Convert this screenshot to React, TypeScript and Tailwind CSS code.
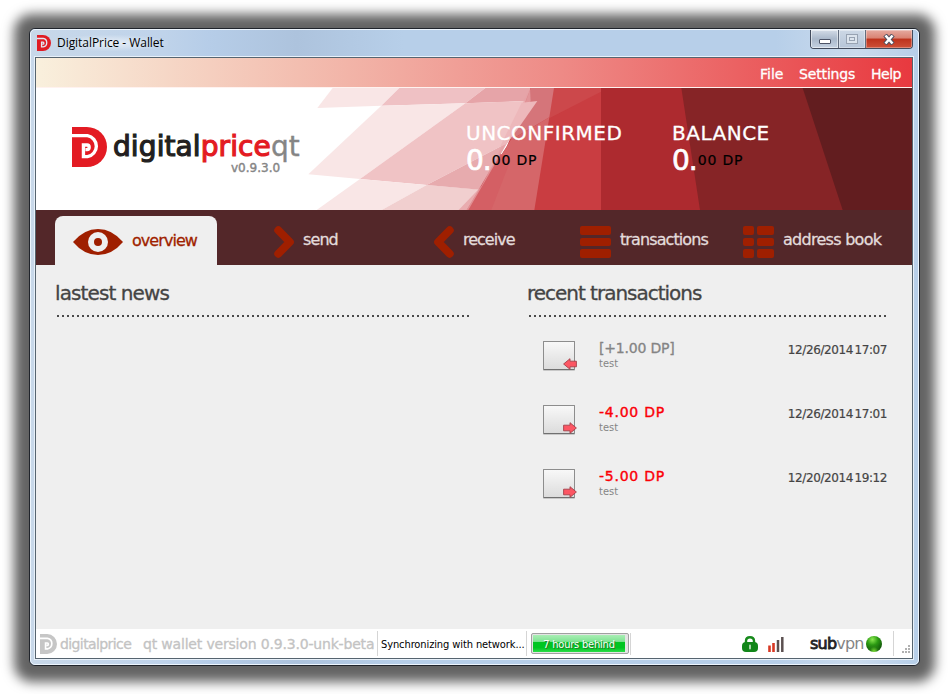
import { ReactNode } from "react";

const transactions = [
  { amount: "[+1.00 DP]", color: "text-[#848484] tracking-[-0.2px] [-webkit-text-stroke:0.3px_#848484]", label: "test", date: "12/26/2014 17:07", incoming: true },
  { amount: "-4.00 DP", color: "text-[#fb0007] tracking-[0.75px] [-webkit-text-stroke:0.4px_#fb0007]", label: "test", date: "12/26/2014 17:01", incoming: false },
  { amount: "-5.00 DP", color: "text-[#fb0007] tracking-[0.75px] [-webkit-text-stroke:0.4px_#fb0007]", label: "test", date: "12/20/2014 19:12", incoming: false },
];

const LogoMark = ({ className, color, gap = "#fff" }: { className: string; color: string; gap?: string }) => (
  <svg className={className} viewBox="0 0 104 120" preserveAspectRatio="none">
    <path d="M0 0H44A60 60 0 0 1 44 120H0Z" fill={color} />
    <path d="M0 26H46A32 32 0 0 1 46 89H34V54H45Q51 54 51 61T45 68H40" fill="none" stroke={gap} strokeWidth="10" />
  </svg>
);

const HeaderArt = () => (
  <svg className="absolute inset-0 h-full w-full" viewBox="-792 114 2628 366" preserveAspectRatio="none">
    <rect x="-792" y="114" width="2628" height="366" fill="#fff" />
    <polygon points="98,114 298,114 244,167 52,174" fill="#f9e6e6" />
    <polygon points="298,114 556,114 496,160 244,167" fill="#efc1c4" />
    <polygon points="556,114 700,114 680,153 496,160" fill="#e6a4a8" />
    <polygon points="244,167 496,160 180,387 25,373" fill="#f9e6e6" />
    <polygon points="496,160 672,153 712,153 620,280 380,405 180,387" fill="#f0c3c5" />
    <polygon points="180,387 380,405 245,480 50,480" fill="#f9e6e6" />
    <polygon points="380,405 555,420 505,480 245,480" fill="#f1cfcf" />
    <polygon points="380,405 620,280 540,419" fill="#e7abae" />
    <polygon points="692,114 906,114 906,480 500,480 620,290 660,195" fill="#c93d41" />
    <polygon points="762,114 903,114 903,125 718,220" fill="#cc484b" />
    <polygon points="692,114 762,114 748,202 632,270 672,172" fill="#d5757a" />
    <polygon points="632,270 748,202 703,480 500,480" fill="#d56669" />
    <polygon points="632,330 574,480 500,480 600,310" fill="#d45f64" />
    <polygon points="690,114 692,153 660,205 620,282 505,480 476,480 545,408 640,220" fill="#e6a0a4" opacity=".75" />
    <polygon points="665,158 712,153 655,235 620,282 600,290" fill="#edb8bb" />
    <polygon points="903,114 1148,114 1204,480 903,480" fill="#ad2a2f" />
    <polygon points="1144,114 1512,114 1632,480 1200,480" fill="#862426" />
    <polygon points="1508,114 1836,114 1836,480 1628,480" fill="#621d1f" />
  </svg>
);

const Amount = ({ title, className }: { title: string; className: string }) => (
  <div className={`absolute top-[33px] whitespace-nowrap text-white ${className}`}>
    <div className="text-[20px] leading-6 tracking-[0.5px] [-webkit-text-stroke:0.3px_#fff]">{title}</div>
    <div className="flex h-[30px] items-start pt-px">
      <span className="text-[28px] leading-[30px] tracking-[-1px] [-webkit-text-stroke:0.7px_#fff]">0.</span>
      <span className="ml-px mt-[5px] text-[14px] leading-[18px] tracking-[0.8px] text-black [-webkit-text-stroke:0.2px_#000]">00 DP</span>
    </div>
  </div>
);

const Chevron = ({ left }: { left?: boolean }) => (
  <svg className={left ? "h-8 w-5 -scale-x-100" : "h-8 w-5"} viewBox="0 0 20 32">
    <path d="M4.300 4.300L15.800 16L4.300 27.700" fill="none" stroke="#9f1f00" strokeWidth="8" strokeLinecap="round" strokeLinejoin="round" />
  </svg>
);

const NavItem = ({ icon, children, className, textClass }: { icon: ReactNode; children: ReactNode; className: string; textClass: string }) => (
  <button className={`flex h-[33px] items-center whitespace-nowrap text-[#e3dcdc] ${className}`}>
    {icon}
    <span className={`-mt-[3px] ml-[9px] text-[16px] leading-5 [-webkit-text-stroke:0.3px_#e3dcdc] ${textClass}`}>{children}</span>
  </button>
);

const WindowButtons = () => (
  <div className="mr-px flex h-[19px] w-[103px] overflow-hidden rounded-b-[4px] border border-t-0 border-[#424b5c]">
    <div className="flex w-7 items-end justify-center border-r border-[#626d7e] bg-gradient-to-b from-[#d4dce7] via-[#aab8ca] to-[#c5d2e2] pb-1 shadow-[inset_0_0_0_1px_#ffffff80]">
      <div className="h-[5px] w-3 rounded-[1px] border border-[#4d5467] bg-white" />
    </div>
    <div className="flex w-[27px] items-center justify-center border-r border-[#626d7e] bg-gradient-to-b from-[#cdd8e5] to-[#b6c5d8] shadow-[inset_0_0_0_1px_#ffffff60]">
      <div className="flex h-[10px] w-3 items-center justify-center border border-[#98a3b2] bg-[#dce4ed]">
        <div className="h-1 w-[6px] border border-[#98a3b2]" />
      </div>
    </div>
    <div className="flex flex-1 items-center justify-center bg-[linear-gradient(#e5aaa0_0%,#d98272_45%,#bd321c_50%,#ce5138_100%)] shadow-[inset_0_0_0_1px_#ffffff50]">
      <svg className="h-[11px] w-3" viewBox="0 0 12 11">
        <path d="M2 1L10 10M10 1L2 10" stroke="#4f5060" strokeWidth="4.500" />
        <path d="M2.500 1.500L9.500 9.500M9.500 1.500L2.500 9.500" stroke="#fff" strokeWidth="2.600" />
      </svg>
    </div>
  </div>
);

const TransactionIcon = ({ incoming }: { incoming: boolean }) => (
  <div className="relative h-[29px] w-[33px] shrink-0">
    <div className="h-[29px] w-8 rounded-[1px] border border-[#8d8d8d] border-b-[#707070] bg-gradient-to-b from-[#f8f8f8] to-[#dcdcdc] shadow-[0_1px_0_#c8c8c8]" />
    <svg className={`absolute left-[20px] top-[17px] h-3 w-[14px] ${incoming ? "" : "-scale-x-100"}`} viewBox="0 0 14 12">
      <path d="M.6 6L7 .7V3.200H13.400V8.800H7V11.300Z" fill="#fc5663" stroke="#a5404a" strokeWidth=".9" strokeLinejoin="round" />
    </svg>
  </div>
);

const Dots = ({ className }: { className: string }) => (
  <div className={`h-[2px] bg-[repeating-linear-gradient(90deg,#4a4a4a_0_2px,transparent_2px_5px)] ${className}`} />
);

const StatusBar = () => (
  <footer className="flex h-[29px] items-center whitespace-nowrap bg-white">
    <LogoMark className="ml-1 h-5 w-[17px]" color="#c6c6c6" />
    <span className="ml-[3px] w-[72px] text-[14px] leading-5 tracking-[-0.6px] text-[#c3c3c3] [-webkit-text-stroke:0.3px_#c3c3c3]">digitalprice</span>
    <span className="ml-[11px] w-[234px] text-[14px] leading-5 tracking-[-0.18px] text-[#c3c3c3] [-webkit-text-stroke:0.3px_#c3c3c3]">qt wallet version 0.9.3.0-unk-beta</span>
    <span className="h-[25px] w-px bg-[#d5d5d5]" />
    <span className="ml-[3px] mt-[3px] w-[145px] font-['DejaVu_Sans_Condensed'] text-[11px] leading-4 tracking-[-0.1px] text-black">Synchronizing with network...</span>
    <span className="h-[25px] w-px bg-[#d5d5d5]" />
    <div className="ml-1 flex h-[21px] w-[98px] rounded-[2px] border border-[#a0a0a0] bg-[#e4e4e4] p-px pr-[3px]">
      <div className="flex flex-1 items-center justify-center bg-[linear-gradient(#a9eeb5_0%,#7fe392_38%,#00c521_42%,#00c521_75%,#2bdd49_100%)] pt-[2px] font-['DejaVu_Sans_Condensed'] text-[11px] leading-4 tracking-[-0.2px] text-white [text-shadow:1px_1px_0_#267c2e]">
        7 hours behind
      </div>
    </div>
    <span className="ml-px h-[22px] w-px bg-[#d5d5d5]" />
    <svg className="ml-[111px] mt-px h-4 w-4" viewBox="0 0 16 16">
      <path d="M4 8V5Q4 1.300 8 1.300T12 5V8" fill="none" stroke="#178a1c" strokeWidth="2.400" />
      <rect y="6" width="16" height="10" rx="4" fill="#118619" />
      <path d="M8 9.500V12.500" stroke="#b9dfb9" strokeWidth="1.800" strokeLinecap="round" />
    </svg>
    <svg className="ml-[10px] h-4 w-4" viewBox="0 0 16 16">
      <path d="M1.500 16V9.500M5.500 16V7" stroke="#d73824" strokeWidth="2.600" />
      <path d="M10 16V4M14.300 16V1" stroke="#5b5050" strokeWidth="2.500" />
    </svg>
    <span className="ml-[26px] w-[54px] text-[16px] leading-5 tracking-[-0.8px] text-[#858585]">
      <span className="text-[#222] [-webkit-text-stroke:0.8px_#222]">sub</span>vpn
    </span>
    <span className="ml-[2px] h-4 w-4 rounded-full bg-[radial-gradient(circle_at_50%_95%,#78dc35_0%,#2b8c1380_25%,transparent_45%),radial-gradient(circle_at_40%_22%,#8be950_0%,#2c9c13_35%,#0a4807_80%)]" />
    <span className="ml-[11px] h-[25px] w-px bg-[#d5d5d5]" />
    <svg className="ml-[7px] mt-3 h-[10px] w-[10px] fill-[#b1b1b1]" viewBox="0 0 10 10">
      <path d="M7 0h2v2h-2zM4 3h2v2h-2zM7 3h2v2h-2zM1 6h2v2h-2zM4 6h2v2h-2zM7 6h2v2h-2z" />
    </svg>
  </footer>
);

export default function App() {
  return (
    <div className="h-[694px] w-[948px] overflow-hidden bg-white px-[29px] pt-7 font-['DejaVu_Sans',sans-serif]">
      <div className="h-[638px] w-[891px] rounded-[6px] border border-[#20242b] bg-[#b7cfe9] shadow-[0_1px_12px_15px_#0000009c]">
        <div className="h-full rounded-[5px] border border-[#edf5fd] bg-[linear-gradient(90deg,#c8d8e9_0%,#bfd3ea_15%,#b6cde8_20%,#adc3dd_30%,#b7cfe9_42%,#b7cfe9_84%,#cbdbed_93%,#b7cfe9_100%)] px-[4px]">
          <div className="flex h-[27px] items-start justify-between pl-[2px]">
            <div className="flex items-center pt-[5px]">
              <LogoMark className="h-4 w-[14px]" color="#e01b24" gap="#e1e9f4" />
              <span className="ml-[2px] whitespace-nowrap bg-[radial-gradient(ellipse_at_center,#ffffffa0,transparent_75%)] px-1 font-['Open_Sans'] text-[12px] leading-4 tracking-[-0.05px] text-black">DigitalPrice - Wallet</span>
            </div>
            <WindowButtons />
          </div>

          <div className="h-[602px] w-[878px] border border-[#56646f] bg-[#efefef] shadow-[0_0_0_1px_#e8f1fa]">
            <nav className="flex h-[30px] items-center justify-end border-b border-[#fff2ef] bg-[linear-gradient(90deg,#f9f0dd_0%,#f3beb0_30%,#ee8a86_60%,#e8393f_100%)] pr-[10px] pt-[2px] text-[14px] leading-5 text-white [-webkit-text-stroke:0.3px_#fff]">
              <span className="w-[39px]">File</span>
              <span className="w-[72px] tracking-[-0.15px]">Settings</span>
              <span className="w-[31px] tracking-[-0.5px]">Help</span>
            </nav>

            <header className="relative h-[122px] overflow-hidden">
              <HeaderArt />
              <div className="absolute left-9 top-[39px] flex h-10 whitespace-nowrap">
                <LogoMark className="h-10 w-[35px]" color="#e31b23" />
                <div className="ml-[6px] mt-[7px] h-[26px] text-[28px] leading-[26px] tracking-[0.1px]">
                  <span className="inline-block text-[#231f20] [-webkit-text-stroke:1.2px_#231f20]">digital</span>
                  <span className="inline-block text-[#e31b23] [-webkit-text-stroke:1.2px_#e31b23]">price</span>
                  <span className="inline-block text-[#858585] [-webkit-text-stroke:0.4px_#858585]">qt</span>
                </div>
              </div>
              <div className="absolute left-[195px] top-[74px] h-3 text-[12px] leading-3 text-[#858585] [-webkit-text-stroke:0.4px_#858585]">v0.9.3.0</div>
              <Amount title="UNCONFIRMED" className="left-[430px]" />
              <Amount title="BALANCE" className="left-[636px]" />
            </header>

            <nav className="flex h-[55px] bg-[#532729] pl-[19px] pt-[6px]">
              <button className="flex h-[49px] w-[162px] items-center rounded-t-[8px] bg-[#efefef] pl-[18px] text-[#9f1f00]">
                <svg className="mt-[2px] h-[26px] w-[50px]" viewBox="0 0 50 26">
                  <path d="M0 13Q11 0 25 0T50 13Q39 26 25 26T0 13Z" fill="#9f1f00" />
                  <circle cx="25" cy="13" r="10" fill="#efefef" />
                  <circle cx="25" cy="13" r="4" fill="#9f1f00" />
                </svg>
                <span className="ml-[9px] text-[16px] leading-5 tracking-[-0.95px] [-webkit-text-stroke:0.3px_#9f1f00]">overview</span>
              </button>
              <div className="flex pt-[9px]">
                <NavItem className="ml-[57px] w-[160px]" textClass="tracking-[-0.9px]" icon={<Chevron />}>send</NavItem>
                <NavItem className="w-[146px]" textClass="tracking-[-1px]" icon={<Chevron left />}>receive</NavItem>
                <NavItem
                  className="w-[163px]"
                  textClass="tracking-[-0.9px]"
                  icon={
                    <svg className="h-8 w-[31px] fill-[#9f1f00]" viewBox="0 0 31 32">
                      <rect width="31" height="9" rx="2" />
                      <rect y="12" width="31" height="8" rx="2" />
                      <rect y="23" width="31" height="9" rx="2" />
                    </svg>
                  }
                >
                  transactions
                </NavItem>
                <NavItem
                  className=""
                  textClass="tracking-[-0.72px]"
                  icon={
                    <svg className="h-8 w-[31px] fill-[#9f1f00]" viewBox="0 0 31 32">
                      <rect width="11" height="9" rx="2" />
                      <rect y="12" width="11" height="8" rx="2" />
                      <rect y="23" width="11" height="9" rx="2" />
                      <rect x="14" width="17" height="9" rx="2" />
                      <rect x="14" y="12" width="17" height="8" rx="2" />
                      <rect x="14" y="23" width="17" height="9" rx="2" />
                    </svg>
                  }
                >
                  address book
                </NavItem>
              </div>
            </nav>

            <main className="flex h-[364px] pl-[19px] pt-4 text-[#444]">
              <section className="w-[472px]">
                <h2 className="text-[20px] leading-6 tracking-[-0.9px] [-webkit-text-stroke:0.3px_#444]">lastest news</h2>
                <Dots className="ml-[2px] mt-[10px] w-[412px]" />
              </section>
              <section className="w-[361px]">
                <h2 className="text-[20px] leading-6 tracking-[-1.02px] [-webkit-text-stroke:0.3px_#444]">recent transactions</h2>
                <Dots className="ml-[2px] mt-[10px] w-[357px]" />
                <ul className="mt-6 pl-4">
                  {transactions.map((tx) => (
                    <li key={tx.date} className="flex h-16 whitespace-nowrap">
                      <TransactionIcon incoming={tx.incoming} />
                      <div className="-mt-[3px] ml-[23px]">
                        <div className={`text-[14px] leading-5 ${tx.color}`}>{tx.amount}</div>
                        <div className="-mt-px font-['DejaVu_Sans_Condensed'] text-[11px] leading-[14px] text-[#858585]">{tx.label}</div>
                      </div>
                      <div className="ml-auto mr-px pt-px text-[12px] leading-4 tracking-[-0.4px] [word-spacing:-2px] [-webkit-text-stroke:0.2px_#444]">{tx.date}</div>
                    </li>
                  ))}
                </ul>
              </section>
            </main>
            <StatusBar />
          </div>
        </div>
      </div>
    </div>
  );
}
